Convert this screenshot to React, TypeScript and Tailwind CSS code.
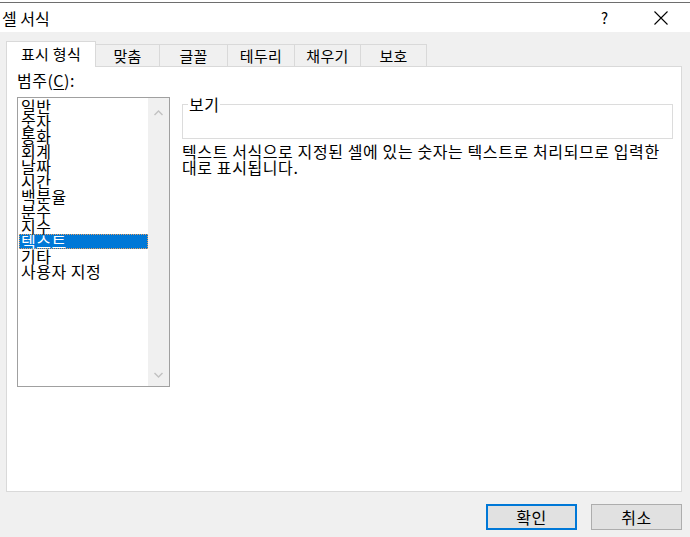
import React from "react";

const items = ["일반", "숫자", "통화", "회계", "날짜", "시간", "백분율", "분수", "지수", "텍스트", "기타", "사용자 지정"];

const tabs = [
  { label: "맞춤", w: "w-[64px]" },
  { label: "글꼴", w: "w-[68px]" },
  { label: "테두리", w: "w-[67px]" },
  { label: "채우기", w: "w-[66px]" },
  { label: "보호", w: "w-[66px]" },
];

export default function App() {
  return (
    <div
      className="w-[690px] h-[537px] bg-[#f0f0f0] flex flex-col overflow-hidden text-black"
      style={{ fontFamily: '"Noto Sans CJK KR", "Noto Sans", sans-serif' }}
    >
      <div className="h-[3px] bg-white border-b border-[#6e6e6e] shrink-0" />
      <div className="h-[29px] bg-white flex items-center shrink-0">
        <span className="pl-[2px] text-[16px] leading-[20px] flex-1">셀 서식</span>
        <span className="text-[15px] leading-[20px] mr-[46px]">?</span>
        <svg width="14" height="14" viewBox="0 0 14 14" className="mr-[22px]">
          <path d="M0.5 0.5 L13.5 13.5 M13.5 0.5 L0.5 13.5" stroke="#000" strokeWidth="1.1" fill="none" />
        </svg>
      </div>
      <div className="flex-1 pl-[6px] pr-[8px] pt-[9px] flex flex-col">
        <div className="flex items-end h-[25px] shrink-0">
          <div className="relative z-10 w-[90px] h-[26px] mb-[-1px] bg-white border border-b-0 border-[#d9d9d9] flex items-center justify-center text-[15px] leading-[18px] tracking-[0.3px] pb-[2px]">
            표시 형식
          </div>
          {tabs.map((t) => (
            <div
              key={t.label}
              className={`${t.w} h-[22px] border-t border-r border-[#d9d9d9] flex items-center justify-center text-[15px] leading-[18px] tracking-[0.3px]`}
            >
              {t.label}
            </div>
          ))}
        </div>
        <div className="h-[426px] bg-white border border-[#d9d9d9] flex pl-[10px] shrink-0">
          <div className="flex flex-col">
            <div className="pt-[5px] h-[22px] text-[16px] leading-[17px] tracking-[0.5px]">
              범주(<span className="underline underline-offset-2">C</span>):
            </div>
            <div className="mt-[8px] w-[153px] h-[290px] border border-[#a0a0a0] flex">
              <div className="flex-1 pt-[1px] pl-[1px]">
                {items.map((it, i) =>
                  i === 9 ? (
                    <div
                      key={it}
                      className="h-[15px] bg-[#0078d7] text-white border border-dotted border-[#e8a060] pl-[1px] text-[16px] leading-[13px] tracking-[0.5px] whitespace-nowrap"
                    >
                      {it}
                    </div>
                  ) : (
                    <div key={it} className="h-[15px] pl-[2px] text-[16px] leading-[15px] tracking-[0.5px] whitespace-nowrap">
                      {it}
                    </div>
                  )
                )}
              </div>
              <div className="w-[21px] bg-[#f0f0f0] flex flex-col items-center justify-between pt-[12px] pb-[8px]">
                <svg width="9" height="6" viewBox="0 0 9 6">
                  <path d="M0.5 5 L4.5 1 L8.5 5" stroke="#c2c2c2" strokeWidth="1.4" fill="none" />
                </svg>
                <svg width="9" height="6" viewBox="0 0 9 6">
                  <path d="M0.5 1 L4.5 5 L8.5 1" stroke="#c2c2c2" strokeWidth="1.4" fill="none" />
                </svg>
              </div>
            </div>
          </div>
          <div className="ml-[12px] flex flex-col pt-[38px]">
            <fieldset className="w-[491px] h-[42px] border border-[#dcdcdc] px-0 pt-0 mt-[-8px]">
              <legend className="ml-[5px] px-[1px] text-[16px] leading-[15px] tracking-[0.5px]">보기</legend>
            </fieldset>
            <div className="mt-[4px] text-[16px] leading-[16px] tracking-[0.6px] whitespace-nowrap">
              텍스트 서식으로 지정된 셀에 있는 숫자는 텍스트로 처리되므로 입력한
              <br />
              대로 표시됩니다.
            </div>
          </div>
        </div>
        <div className="flex justify-end mt-[12px] gap-[14px]">
          <div className="w-[91px] h-[26px] border-2 border-[#0078d7] bg-[#e1e1e1] flex items-center justify-center text-[16px] leading-[18px] tracking-[0.5px]">
            확인
          </div>
          <div className="w-[91px] h-[26px] border border-[#adadad] bg-[#e1e1e1] flex items-center justify-center text-[16px] leading-[18px] tracking-[0.5px]">
            취소
          </div>
        </div>
      </div>
    </div>
  );
}
